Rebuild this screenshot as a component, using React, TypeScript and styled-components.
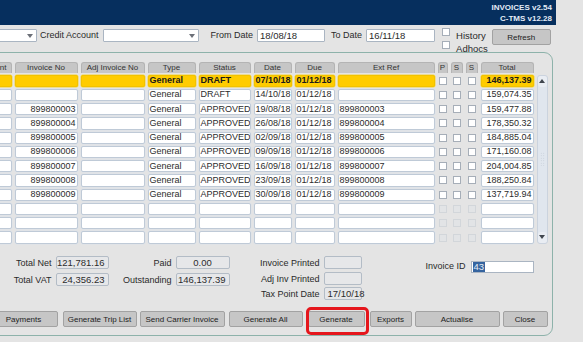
import React from 'react';
import styled, { createGlobalStyle } from 'styled-components';

const GlobalStyle = createGlobalStyle`
  html, body {
    margin: 0;
    padding: 0;
    background: #e4e4e4;
  }
  body {
    font-family: "Liberation Sans", Arial, sans-serif;
    color: #242424;
    overflow: hidden;
  }
`;

const Screen = styled.div`
  width: 583px;
  height: 342px;
  overflow: hidden;
  background: #e4e4e4;
`;

// the form is wider than the capture, its left edge is cut off
const Window = styled.div`
  margin-left: -40px;
  width: 640px;
`;

const TitleBar = styled.header`
  width: 596px;
  height: 25px;
  box-sizing: border-box;
  padding-right: 4px;
  background: #062f5e;
  display: flex;
  flex-direction: column;
  align-items: flex-end;
  justify-content: center;
  color: #e4ecf7;
  font-size: 8px;
  font-weight: bold;
  line-height: 11px;
`;

const FilterBar = styled.div`
  height: 27px;
  box-sizing: border-box;
  padding-top: 4px;
  display: flex;
  align-items: flex-start;
`;

const Label = styled.span<{ $ml?: number }>`
  margin-left: ${(p) => p.$ml ?? 0}px;
  font-size: 9px;
  line-height: 13px;
  color: #2a2a2a;
  white-space: nowrap;
`;

const Combo = styled.div<{ $w: number; $ml?: number }>`
  width: ${(p) => p.$w}px;
  margin-left: ${(p) => p.$ml ?? 0}px;
  height: 13px;
  box-sizing: border-box;
  background: #fff;
  border: 1px solid #aab5c2;
  border-radius: 1px;
  display: flex;
  align-items: center;
  justify-content: flex-end;
  padding-right: 3px;
`;

const TextInput = styled.div<{ $w: number; $ml?: number }>`
  width: ${(p) => p.$w}px;
  margin-left: ${(p) => p.$ml ?? 0}px;
  height: 13px;
  box-sizing: border-box;
  background: #fff;
  border: 1px solid #aab5c2;
  border-radius: 1px;
  padding-left: 2px;
  font-size: 9.5px;
  line-height: 11px;
  color: #2a2a2a;
`;

const CheckGroup = styled.div`
  margin-left: 7px;
  margin-top: -1px;
  display: grid;
  grid-template-columns: 8px auto;
  grid-auto-rows: 12px;
  column-gap: 6px;
  row-gap: 1px;
  align-items: start;
`;

const Check = styled.span<{ $off?: boolean }>`
  display: block;
  width: 8px;
  height: 8px;
  box-sizing: border-box;
  background: ${(p) => (p.$off ? '#e2e4e6' : '#fff')};
  border: 1px solid ${(p) => (p.$off ? '#d2d6da' : '#a6aeb8')};
`;

const CheckLabel = styled.span`
  font-size: 9.5px;
  line-height: 11px;
  margin-top: 2px;
  color: #2a2a2a;
`;

const Panel = styled.section`
  width: 593px;
  box-sizing: border-box;
  border: 1.5px solid #8db2aa;
  border-radius: 9px;
  padding: 8.5px 2.5px 8px 8.5px;
`;

const Grid = styled.div`
  display: grid;
  grid-template-columns: 42px 63px 64px 48px 52px 38px 40px 97px 10px 12px 12px 53px 11px;
  grid-template-rows: 11px repeat(12, 12.27px);
  column-gap: 3px;
  row-gap: 2px;
`;

const Head = styled.div<{ $right?: boolean }>`
  background: #c6c6c6;
  border: 1px solid #b4b4b4;
  border-bottom: none;
  border-radius: 3px 3px 0 0;
  font-size: 8px;
  line-height: 10px;
  color: #333;
  display: flex;
  justify-content: ${(p) => (p.$right ? 'flex-end' : 'center')};
  padding-right: ${(p) => (p.$right ? 4 : 0)}px;
  overflow: hidden;
  white-space: nowrap;
`;

const Cell = styled.div<{ $align?: 'left' | 'right'; $hl?: boolean }>`
  box-sizing: border-box;
  background: ${(p) => (p.$hl ? '#ffcc00' : '#fff')};
  border: 1px solid ${(p) => (p.$hl ? '#f2c200' : '#bfcad7')};
  box-shadow: 0 0 0 0.5px ${(p) => (p.$hl ? '#f5d640' : '#dbe2ea')};
  border-radius: 2px;
  padding: 0 1px;
  font-size: 9px;
  line-height: 9px;
  font-weight: ${(p) => (p.$hl ? 'bold' : 'normal')};
  color: ${(p) => (p.$hl ? '#1a1a1a' : '#2c2c2c')};
  display: flex;
  align-items: center;
  justify-content: ${(p) => (p.$align === 'right' ? 'flex-end' : 'flex-start')};
  white-space: nowrap;
  overflow: hidden;
`;

const CheckCell = styled.div`
  display: flex;
  align-items: center;
  justify-content: center;
`;

const Scroll = styled.div`
  grid-column: 13;
  grid-row: 2 / span 12;
  background: #e0e6ee;
  border: 1px solid #cbd3de;
  border-radius: 3px;
  display: flex;
  flex-direction: column;
  justify-content: space-between;
  align-items: center;
`;

const ScrollBtn = styled.div`
  width: 100%;
  height: 11px;
  display: flex;
  align-items: center;
  justify-content: center;
  background: #e9edf3;
  border-radius: 3px;
`;

const Grip = styled.div`
  width: 5px;
  height: 14px;
  background-image: radial-gradient(#c4ccd6 0.6px, transparent 0.8px);
  background-size: 2.5px 2.5px;
`;

const Summary = styled.div`
  margin-top: 12.5px;
  display: flex;
  align-items: flex-start;
`;

const Fields = styled.div<{ $label: number; $box: number; $gap: number; $ml?: number }>`
  margin-left: ${(p) => p.$ml ?? 0}px;
  display: grid;
  grid-template-columns: ${(p) => p.$label}px ${(p) => p.$box}px;
  grid-auto-rows: 13px;
  column-gap: 4px;
  row-gap: ${(p) => p.$gap}px;
`;

const FieldLabel = styled.span`
  font-size: 9px;
  line-height: 15px;
  text-align: right;
  white-space: nowrap;
  color: #2a2a2a;
`;

const ReadBox = styled.div<{ $center?: boolean; $left?: boolean }>`
  box-sizing: border-box;
  background: #e6e7e9;
  border: 1px solid #b3bcc6;
  border-radius: 2px;
  padding: 0 3px;
  font-size: 9.5px;
  display: flex;
  align-items: center;
  justify-content: ${(p) => (p.$center ? 'center' : p.$left ? 'flex-start' : 'flex-end')};
  color: #2c2c2c;
`;

const IdField = styled.div`
  margin-left: 64px;
  margin-top: 4px;
  display: flex;
  align-items: center;
`;

const IdInput = styled.div`
  margin-left: 5px;
  width: 63px;
  height: 12px;
  box-sizing: border-box;
  background: #fff;
  border: 1px solid #aab5c2;
  padding-left: 1px;
  display: flex;
  align-items: center;
`;

const Selected = styled.span`
  background: #35649f;
  color: #e8eef6;
  font-size: 9.5px;
  line-height: 10px;
  padding: 0 1px;
`;

const ButtonRow = styled.div`
  margin-top: 7.5px;
  margin-left: 20px;
  display: flex;
`;

const BtnWrap = styled.div<{ $w: number; $mr: number }>`
  position: relative;
  width: ${(p) => p.$w}px;
  margin-right: ${(p) => p.$mr}px;
`;

const Button = styled.button`
  width: 100%;
  height: 16px;
  margin: 0;
  padding: 0;
  background: #c6c6c6;
  border: 1px solid #a2a2a2;
  border-radius: 2px;
  font-family: "Liberation Sans", Arial, sans-serif;
  font-size: 8px;
  color: #222;
  white-space: nowrap;
`;

const RefreshButton = styled(Button)`
  width: 59px;
  margin-left: 4px;
`;

const Ring = styled.div`
  position: absolute;
  left: -2px;
  right: -4px;
  top: -1px;
  bottom: -8px;
  border: 3px solid #e5161c;
  border-radius: 5px;
  pointer-events: none;
`;

const Tri = ({ up = false, color = '#6c7078' }: { up?: boolean; color?: string }) => (
  <svg width="6" height="4" viewBox="0 0 6 4">
    <path d={up ? 'M0 4 L3 0 L6 4 Z' : 'M0 0 L6 0 L3 4 Z'} fill={color} />
  </svg>
);

type Row = {
  inv: string;
  status: string;
  date: string;
  ext: string;
  total: string;
};

const rows: Row[] = [
  { inv: '', status: 'DRAFT', date: '07/10/18', ext: '', total: '146,137.39' },
  { inv: '', status: 'DRAFT', date: '14/10/18', ext: '', total: '159,074.35' },
  { inv: '899800003', status: 'APPROVED', date: '19/08/18', ext: '899800003', total: '159,477.88' },
  { inv: '899800004', status: 'APPROVED', date: '26/08/18', ext: '899800004', total: '178,350.32' },
  { inv: '899800005', status: 'APPROVED', date: '02/09/18', ext: '899800005', total: '184,885.04' },
  { inv: '899800006', status: 'APPROVED', date: '09/09/18', ext: '899800006', total: '171,160.08' },
  { inv: '899800007', status: 'APPROVED', date: '16/09/18', ext: '899800007', total: '204,004.85' },
  { inv: '899800008', status: 'APPROVED', date: '23/09/18', ext: '899800008', total: '188,250.84' },
  { inv: '899800009', status: 'APPROVED', date: '30/09/18', ext: '899800009', total: '137,719.94' },
];

const EMPTY_ROWS = 3;

const buttons = [
  { label: 'Payments', w: 68, mr: 5 },
  { label: 'Generate Trip List', w: 74, mr: 3 },
  { label: 'Send Carrier Invoice', w: 85, mr: 4 },
  { label: 'Generate All', w: 74, mr: 5 },
  { label: 'Generate', w: 57, mr: 5, ring: true },
  { label: 'Exports', w: 42, mr: 3 },
  { label: 'Actualise', w: 85, mr: 3 },
  { label: 'Close', w: 45, mr: 0 },
];

function InvoiceRow({ row, first }: { row: Row; first: boolean }) {
  return (
    <>
      <Cell $hl={first} />
      <Cell $hl={first} $align="right">{row.inv}</Cell>
      <Cell $hl={first} />
      <Cell $hl={first}>General</Cell>
      <Cell $hl={first}>{row.status}</Cell>
      <Cell $hl={first}>{row.date}</Cell>
      <Cell $hl={first}>01/12/18</Cell>
      <Cell $hl={first}>{row.ext}</Cell>
      <CheckCell><Check /></CheckCell>
      <CheckCell><Check /></CheckCell>
      <CheckCell><Check /></CheckCell>
      <Cell $hl={first} $align="right">{row.total}</Cell>
    </>
  );
}

function EmptyRow() {
  return (
    <>
      {Array.from({ length: 8 }).map((_, i) => (
        <Cell key={i} />
      ))}
      <CheckCell><Check $off /></CheckCell>
      <CheckCell><Check $off /></CheckCell>
      <CheckCell><Check $off /></CheckCell>
      <Cell />
    </>
  );
}

export default function App() {
  return (
    <Screen>
      <GlobalStyle />
      <Window>
        <TitleBar>
          <span>INVOICES v2.54</span>
          <span>C-TMS v12.28</span>
        </TitleBar>

        <FilterBar>
          <Combo $w={77}><Tri /></Combo>
          <Label $ml={3}>Credit Account</Label>
          <Combo $w={96} $ml={4}><Tri /></Combo>
          <Label $ml={12}>From Date</Label>
          <TextInput $w={68} $ml={4}>18/08/18</TextInput>
          <Label $ml={6}>To Date</Label>
          <TextInput $w={69} $ml={4}>16/11/18</TextInput>
          <CheckGroup>
            <Check />
            <CheckLabel>History</CheckLabel>
            <Check />
            <CheckLabel>Adhocs</CheckLabel>
          </CheckGroup>
          <RefreshButton>Refresh</RefreshButton>
        </FilterBar>

        <Panel>
          <Grid>
            <Head $right>Account</Head>
            <Head>Invoice No</Head>
            <Head>Adj Invoice No</Head>
            <Head>Type</Head>
            <Head>Status</Head>
            <Head>Date</Head>
            <Head>Due</Head>
            <Head>Ext Ref</Head>
            <Head>P</Head>
            <Head>S</Head>
            <Head>S</Head>
            <Head>Total</Head>
            <span />
            {rows.map((r, i) => (
              <InvoiceRow key={i} row={r} first={i === 0} />
            ))}
            {Array.from({ length: EMPTY_ROWS }).map((_, i) => (
              <EmptyRow key={`e${i}`} />
            ))}
            <Scroll>
              <ScrollBtn><Tri up color="#40464e" /></ScrollBtn>
              <Grip />
              <ScrollBtn><Tri color="#40464e" /></ScrollBtn>
            </Scroll>
          </Grid>

          <Summary>
            <Fields $label={82} $box={53} $gap={4}>
              <FieldLabel>Total Net</FieldLabel>
              <ReadBox>121,781.16</ReadBox>
              <FieldLabel>Total VAT</FieldLabel>
              <ReadBox>24,356.23</ReadBox>
            </Fields>
            <Fields $label={58} $box={54} $gap={4} $ml={5}>
              <FieldLabel>Paid</FieldLabel>
              <ReadBox $center>0.00</ReadBox>
              <FieldLabel>Outstanding</FieldLabel>
              <ReadBox>146,137.39</ReadBox>
            </Fields>
            <Fields $label={86} $box={38} $gap={2.5} $ml={4}>
              <FieldLabel>Invoice Printed</FieldLabel>
              <ReadBox />
              <FieldLabel>Adj Inv Printed</FieldLabel>
              <ReadBox />
              <FieldLabel>Tax Point Date</FieldLabel>
              <ReadBox $left>17/10/18</ReadBox>
            </Fields>
            <IdField>
              <Label>Invoice ID</Label>
              <IdInput><Selected>43</Selected></IdInput>
            </IdField>
          </Summary>

          <ButtonRow>
            {buttons.map((b) => (
              <BtnWrap key={b.label} $w={b.w} $mr={b.mr}>
                <Button>{b.label}</Button>
                {b.ring && <Ring />}
              </BtnWrap>
            ))}
          </ButtonRow>
        </Panel>
      </Window>
    </Screen>
  );
}
